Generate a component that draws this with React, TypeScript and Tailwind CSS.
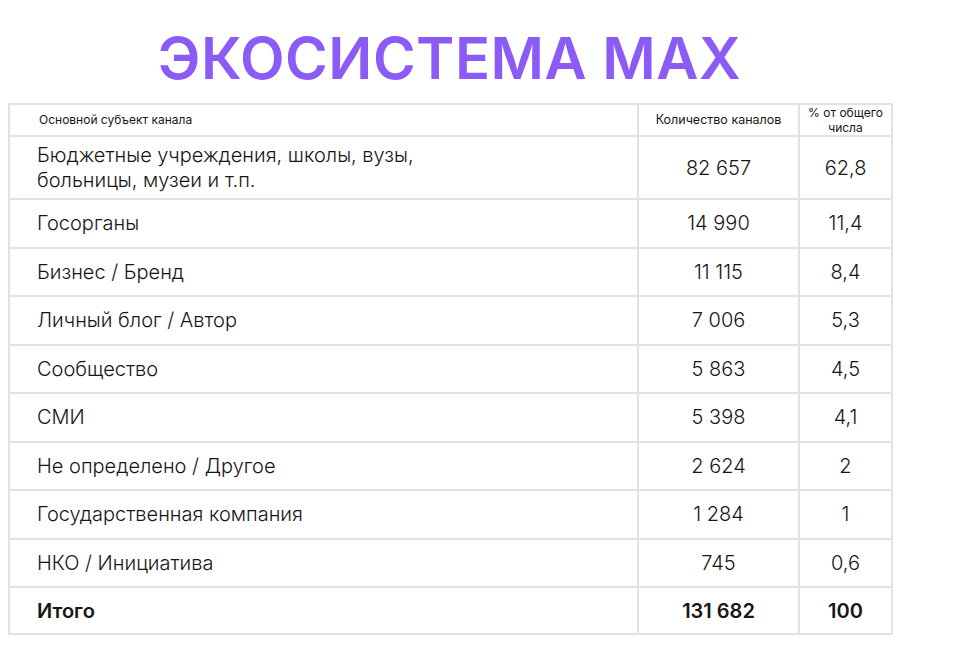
import React from "react";

const rows: [string, string, string][] = [
  ["Госорганы", "14 990", "11,4"],
  ["Бизнес / Бренд", "11 115", "8,4"],
  ["Личный блог / Автор", "7 006", "5,3"],
  ["Сообщество", "5 863", "4,5"],
  ["СМИ", "5 398", "4,1"],
  ["Не определено / Другое", "2 624", "2"],
  ["Государственная компания", "1 284", "1"],
  ["НКО / Инициатива", "745", "0,6"],
];

const cell = "border-2 border-[#e2e2e2]";

export default function App() {
  return (
    <div className="min-h-screen bg-white pl-[8px] pt-[23px] text-[#161616] [font-family:Inter,'Noto_Sans',sans-serif]">
      <div className="w-[883px]">
        {/* Title */}
        <h1 className="text-center text-[58px] font-semibold leading-[70px] tracking-[0.5px] text-[#8c5bf5]">
          ЭКОСИСТЕМА MAX
        </h1>

        {/* Table */}
        <table className="mt-[10px] w-full table-fixed border-collapse">
          <colgroup>
            <col className="w-[629px]" />
            <col className="w-[161px]" />
            <col className="w-[93px]" />
          </colgroup>
          <thead>
            <tr className="h-[31px]">
              <th className={`${cell} pl-[29px] text-left text-[12px] font-normal`}>
                Основной субъект канала
              </th>
              <th className={`${cell} text-center text-[12.5px] font-normal`}>
                Количество каналов
              </th>
              <th className={`${cell} text-center text-[12px] font-normal leading-[15px]`}>
                % от общего
                <br />
                числа
              </th>
            </tr>
          </thead>
          <tbody className="text-[20px] font-light">
            <tr className="h-[63px]">
              <td className={`${cell} pl-[27px] leading-[25px]`}>
                Бюджетные учреждения, школы, вузы,
                <br />
                больницы, музеи и т.п.
              </td>
              <td className={`${cell} text-center`}>82 657</td>
              <td className={`${cell} text-center`}>62,8</td>
            </tr>
            {rows.map(([name, count, pct]) => (
              <tr key={name} className="h-[48.5px]">
                <td className={`${cell} pl-[27px]`}>{name}</td>
                <td className={`${cell} text-center`}>{count}</td>
                <td className={`${cell} text-center`}>{pct}</td>
              </tr>
            ))}
            <tr className="h-[47px] font-semibold">
              <td className={`${cell} pl-[27px]`}>Итого</td>
              <td className={`${cell} text-center`}>131 682</td>
              <td className={`${cell} text-center`}>100</td>
            </tr>
          </tbody>
        </table>
      </div>
    </div>
  );
}
